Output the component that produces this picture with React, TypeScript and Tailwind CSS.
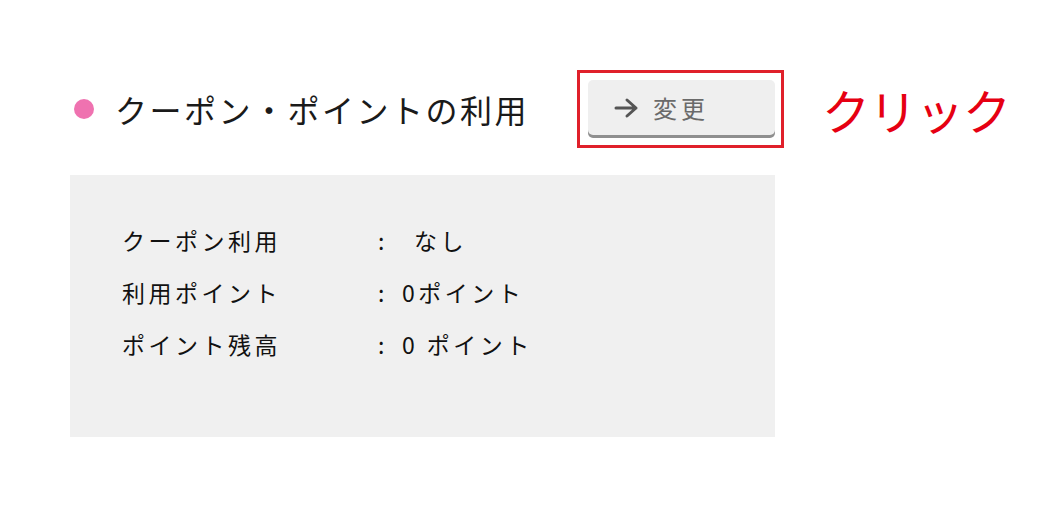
export default function App() {
  const rows = [
    { label: 'クーポン利用', value: 'なし', gap: 'ml-[26px]' },
    { label: '利用ポイント', value: '0ポイント', gap: 'ml-[14px]' },
    { label: 'ポイント残高', value: '0 ポイント', gap: 'ml-[14px]' },
  ]

  return (
    <div
      className="w-[1062px] h-[516px] bg-white text-[#1a1a1a]"
      style={{ fontFamily: '"Noto Sans CJK JP", "Noto Sans", sans-serif' }}
    >
      <div className="pt-[70px] pl-[70px]">
        <div className="flex items-center h-[78px]">
          <div className="w-[20px] h-[20px] rounded-full bg-[#ef72b0] ml-[4px]" />
          <h2 className="ml-[21px] w-[462px] text-[32px] tracking-[2.5px] leading-none whitespace-nowrap">クーポン・ポイントの利用</h2>
          <div className="w-[207px] h-[78px] border-[3px] border-[#e0202a] pl-[8px] pt-[7px]">
            <button className="w-[187px] h-[55px] rounded-[5px] bg-[#efefef] shadow-[0_3px_0_#8f8f8f] flex items-center pl-[26px] text-[24px] text-[#6a6a6a] tracking-[4px]">
              <svg width="26" height="22" viewBox="0 0 26 22" className="mr-[13px]">
                <path d="M2 11h20M13 3l9 8-9 8" fill="none" stroke="#555" strokeWidth="3" strokeLinecap="round" strokeLinejoin="round" />
              </svg>
              変更
            </button>
          </div>
          <span className="ml-[38px] text-[48px] text-[#e60012] leading-none tracking-[-1px]">クリック</span>
        </div>

        <div className="mt-[27px] w-[705px] h-[262px] bg-[#f0f0f0] pt-[39px] pl-[52px]">
          {rows.map(r => (
            <div key={r.label} className="flex items-center h-[52px] text-[23px] text-[#111] tracking-[3.5px]">
              <span className="w-[256px]">{r.label}</span>
              <span>:</span>
              <span className={r.gap}>{r.value}</span>
            </div>
          ))}
        </div>
      </div>
    </div>
  )
}
